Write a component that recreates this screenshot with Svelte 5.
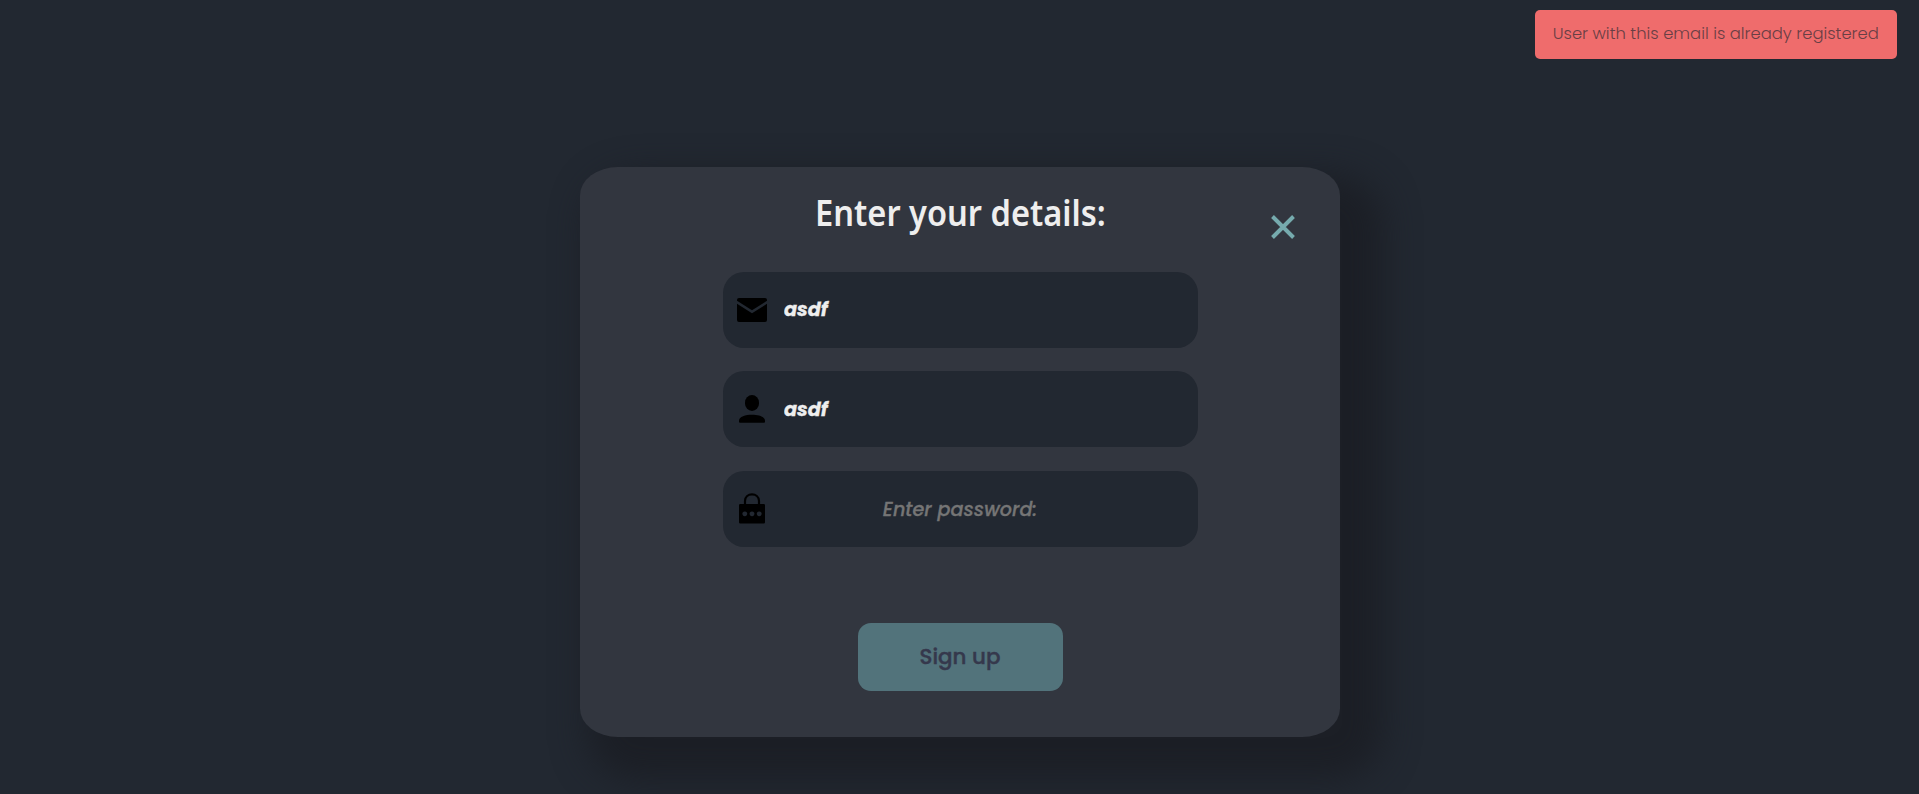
<script>
  let email = $state('asdf');
  let name = $state('asdf');
  let password = $state('');
</script>

<main>
  <div class="toast" role="alert"><span>User with this email is already registered</span></div>

  <form class="card" onsubmit={(e) => e.preventDefault()}>
    <h1>Enter your details:</h1>
    <button class="close" type="button" aria-label="Close">
      <svg width="24" height="24" viewBox="0 0 24 24"><path d="M1.5 1.5 22.5 22.5M22.5 1.5 1.5 22.5" stroke="currentColor" stroke-width="3.9" fill="none" /></svg>
    </button>

    <div class="fields">
      <label class="field">
        <svg width="30" height="24" viewBox="0 0 30 24">
          <path d="M2 0H28Q30 0 30 2V2.8L15 12.3 0 2.8V2Q0 0 2 0Z" />
          <path d="M0 5.8 15 15.2 30 5.8V22Q30 24 28 24H2Q0 24 0 22Z" />
        </svg>
        <input type="text" bind:value={email} />
      </label>
      <label class="field">
        <svg width="30" height="28" viewBox="0 0 30 28">
          <rect x="8" y="0" width="14" height="16" rx="7" ry="7.4" />
          <path d="M2 25.5C2 21.8 8.5 19.8 15 19.8S28 21.8 28 25.5V26.7Q28 27.7 27 27.7H3Q2 27.7 2 26.7Z" />
        </svg>
        <input class="low" type="text" bind:value={name} />
      </label>
      <label class="field">
        <svg width="30" height="31" viewBox="0 0 30 31">
          <path d="M8 12V8C8 -.9 22 -.9 22 8V12" fill="none" stroke="#000" stroke-width="2.2" />
          <path fill-rule="evenodd" d="M3.2 11H26.8Q28 11 28 12.2V29.2Q28 30.4 26.8 30.4H3.2Q2 30.4 2 29.2V12.2Q2 11 3.2 11ZM7.8 18.4a2.4 2.4 0 1 0 .01 0ZM15 18.4a2.4 2.4 0 1 0 .01 0ZM22.2 18.4a2.4 2.4 0 1 0 .01 0Z" />
        </svg>
        <input class="low" type="password" placeholder="Enter password:" bind:value={password} />
      </label>
    </div>

    <button class="submit" type="submit">Sign up</button>
  </form>
</main>

<style>
  :global(body) { margin: 0; background: #222831; }
  main {
    position: relative;
    box-sizing: border-box;
    height: 794px;
    padding-top: 167px;
    overflow: hidden;
    background: #222831;
    font-family: Poppins, Inter, sans-serif;
  }
  .toast {
    position: absolute;
    top: 10px;
    right: 22.5px;
    box-sizing: border-box;
    width: 361.5px;
    height: 49px;
    border-radius: 5px;
    background: #ef6c6c;
    color: #222831;
    font-size: 16.4px;
    font-weight: 300;
    line-height: 47px;
    text-align: center;
    white-space: nowrap;
  }
  .toast span { opacity: 0.66; }
  .card {
    position: relative;
    box-sizing: border-box;
    display: flex;
    flex-direction: column;
    align-items: center;
    width: 760px;
    height: 570px;
    margin: 0 auto;
    padding-top: 20px;
    border-radius: 5%;
    background: #32363f;
    box-shadow: 25px 25px 34px 18px #1c1f26;
    left: 0.5px;
  }
  h1 {
    margin: 0;
    height: 85px;
    color: #eee;
    font: 600 36px/52px 'Noto Sans', sans-serif;
    white-space: nowrap;
    transform: scaleX(0.906);
  }
  .close {
    position: absolute;
    top: 47.5px;
    right: 45px;
    padding: 0;
    border: 0;
    background: none;
    color: #76abae;
    line-height: 0;
  }
  .fields { display: grid; gap: 23.4px; }
  .field {
    box-sizing: border-box;
    display: flex;
    align-items: center;
    gap: 17.5px;
    width: 475px;
    height: 76px;
    padding: 0 14px;
    border-radius: 21px;
    background: #222831;
  }
  .field svg { flex: none; position: relative; top: -0.2px; }
  input {
    box-sizing: border-box;
    width: 352px;
    height: 60px;
    padding: 0;
    border: 0;
    outline: 0;
    background: none;
    color: #eee;
    font: italic 700 19.2px/60px Poppins, Inter, sans-serif;
    -webkit-text-stroke: 0.3px currentColor;
  }
  .low { margin-top: 1.6px; }
  input::placeholder { color: #757575; font-weight: 500; text-align: center; opacity: 1; }
  .submit {
    width: 205px;
    height: 68px;
    margin-top: 76.2px;
    padding: 0;
    border: 0;
    border-radius: 13px;
    background: #52737b;
    color: #35384c;
    font: 500 21.4px/68px Poppins, Inter, sans-serif;
    -webkit-text-stroke: 0.4px currentColor;
  }
</style>
